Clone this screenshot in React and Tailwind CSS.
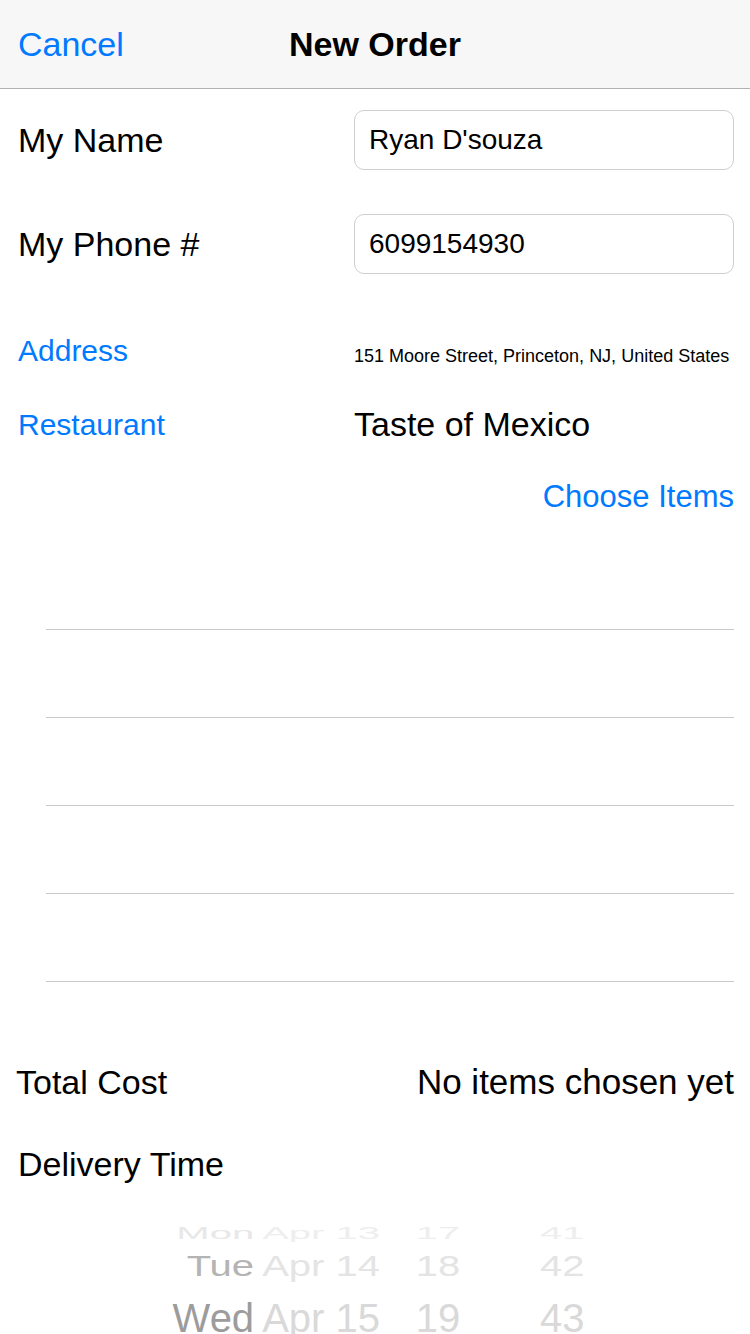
const BLUE = "text-[#007aff]";

const PICKER_ROWS = [
  { day: "Mon", date: "Apr 13", hour: "17", min: "41", row: "h-[24px] -mt-[5px]", scale: "scale-y-[0.42]", dayColor: "text-[#e8e8e8]", rest: "text-[#eeeeee]" },
  { day: "Tue", date: "Apr 14", hour: "18", min: "42", row: "h-[42px]", scale: "scale-y-[0.72]", dayColor: "text-[#b4b4b4]", rest: "text-[#e4e4e4]" },
  { day: "Wed", date: "Apr 15", hour: "19", min: "43", row: "h-[62px]", scale: "scale-y-100", dayColor: "text-[#9c9c9c]", rest: "text-[#d9d9d9]" },
];

function InputRow({ label, value, className }) {
  return (
    <div className={`flex items-center h-[60px] ${className}`}>
      <span className="w-[354px] shrink-0 pl-[18px] text-[34px] text-black">{label}</span>
      <div className="flex-1 mr-[16px] h-full flex items-center rounded-[10px] border border-[#cfcfcf] px-[14px] text-[28px] text-black">
        {value}
      </div>
    </div>
  );
}

export default function App() {
  return (
    <div className="w-[750px] h-[1334px] overflow-hidden bg-white font-['Liberation_Sans',Arial,sans-serif]">
      <header className="relative h-[89px] bg-[#f7f7f7] border-b border-[#b2b2b2] flex items-center">
        <span className={`pl-[18px] text-[34px] ${BLUE}`}>Cancel</span>
        <span className="absolute left-0 right-0 text-center text-[34px] font-bold text-black pointer-events-none">
          New Order
        </span>
      </header>

      <InputRow label="My Name" value="Ryan D'souza" className="mt-[21px]" />
      <InputRow label="My Phone #" value="6099154930" className="mt-[44px]" />

      <div className="mt-[56px] h-[40px] flex items-center">
        <span className={`w-[354px] shrink-0 pl-[18px] text-[30px] ${BLUE}`}>Address</span>
        <span className="pt-[12px] text-[18px] text-black whitespace-nowrap">
          151 Moore Street, Princeton, NJ, United States
        </span>
      </div>

      <div className="mt-[34px] h-[40px] flex items-center">
        <span className={`w-[354px] shrink-0 pl-[18px] text-[30px] ${BLUE}`}>Restaurant</span>
        <span className="text-[34px] text-black">Taste of Mexico</span>
      </div>

      <div className="mt-[33px] h-[40px] flex items-center justify-end pr-[16px]">
        <span className={`text-[31px] ${BLUE}`}>Choose Items</span>
      </div>

      <div className="mt-[25px] ml-[46px] mr-[16px]">
        {[0, 1, 2, 3, 4].map((i) => (
          <div key={i} className="h-[88px] border-b border-[#c8c7cc]" />
        ))}
      </div>

      <div className="mt-[80px] h-[40px] flex items-center justify-between pl-[16px] pr-[16px]">
        <span className="text-[34px] text-black">Total Cost</span>
        <span className="text-[35px] text-black">No items chosen yet</span>
      </div>

      <div className="mt-[42px] h-[40px] flex items-center pl-[18px]">
        <span className="text-[34px] text-black">Delivery Time</span>
      </div>

      <div className="mt-[42px] h-[108px] overflow-hidden">
        {PICKER_ROWS.map((r) => (
          <div key={r.day} className={`flex items-center leading-none ${r.row}`}>
            <div className={`flex w-full items-center text-[40px] ${r.scale}`}>
              <span className="w-[380px] shrink-0 text-right whitespace-nowrap">
                <span className={r.dayColor}>{r.day}</span>
                <span className={r.rest}>{"\u2009"}{r.date}</span>
              </span>
              <span className={`w-[116px] shrink-0 text-center ${r.rest}`}>{r.hour}</span>
              <span className={`pl-[44px] ${r.rest}`}>{r.min}</span>
            </div>
          </div>
        ))}
      </div>
    </div>
  );
}
